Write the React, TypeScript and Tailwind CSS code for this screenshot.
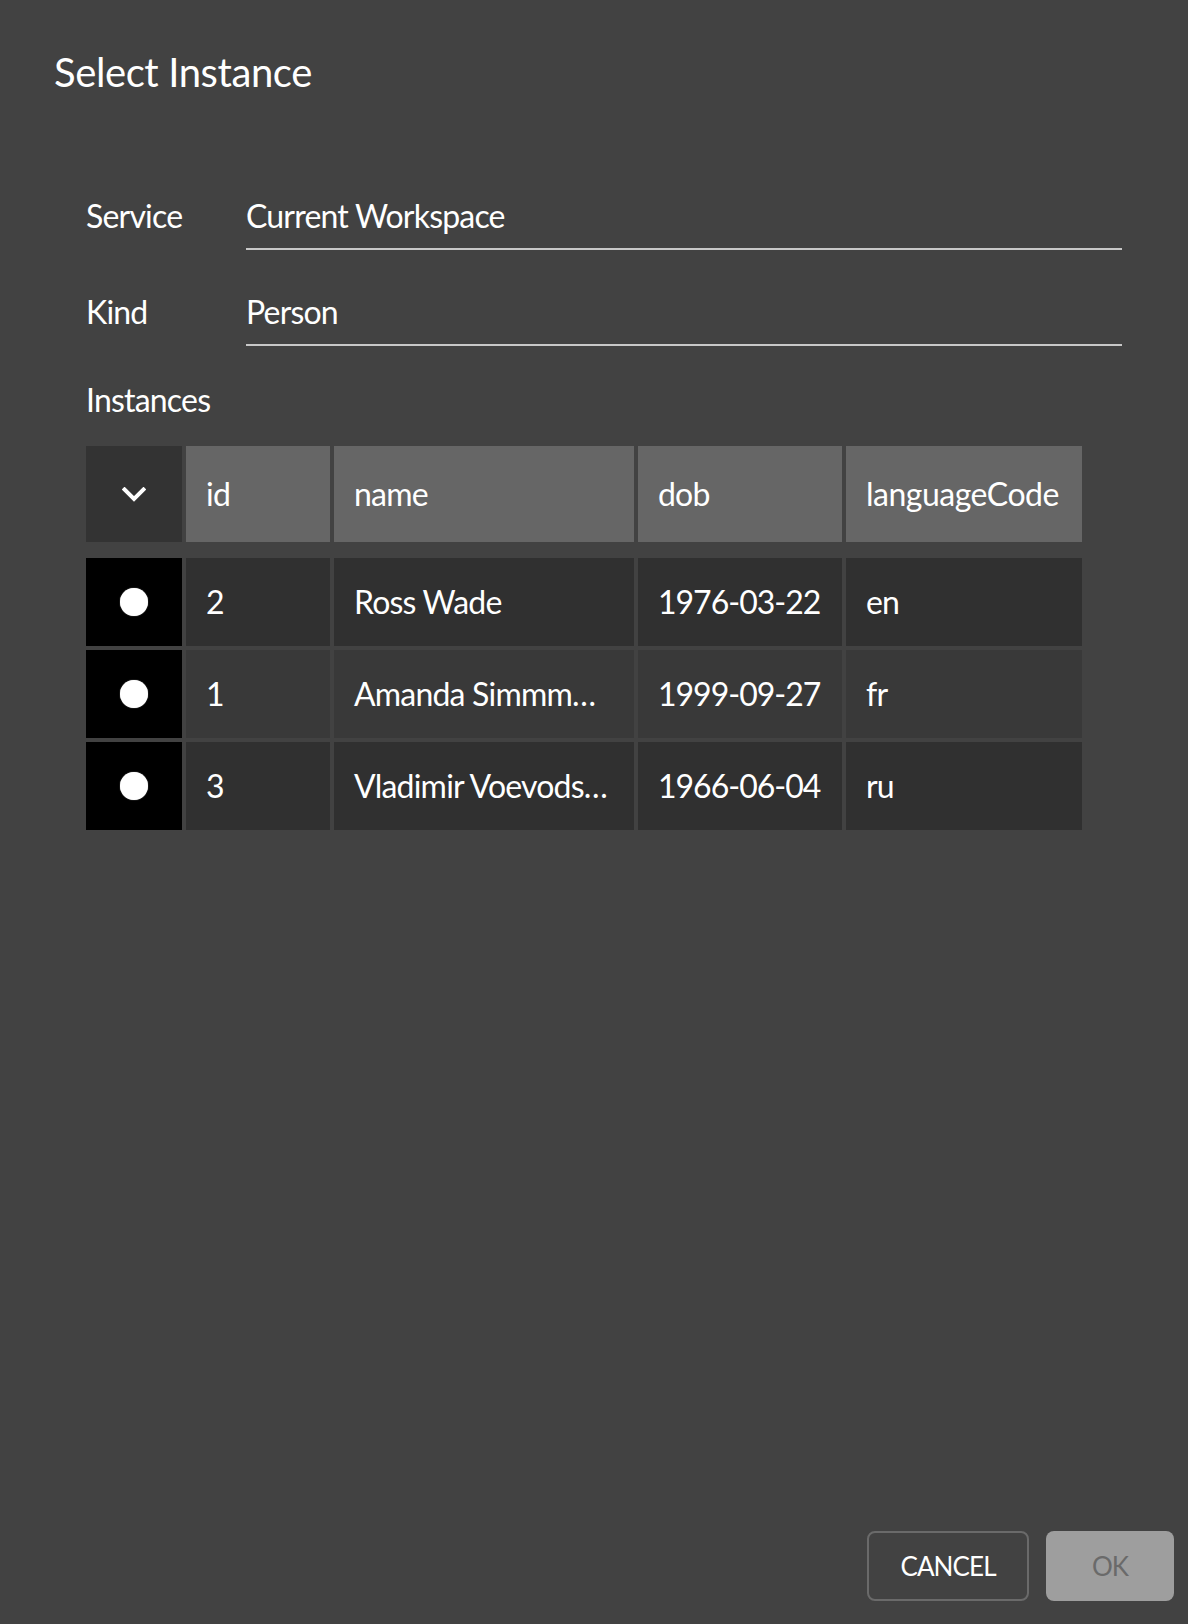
import React from "react";

const rows = [
  { id: "2", name: "Ross Wade", dob: "1976-03-22", lang: "en", bg: "bg-[#303030]" },
  { id: "1", name: "Amanda Simmm…", dob: "1999-09-27", lang: "fr", bg: "bg-[#393939]" },
  { id: "3", name: "Vladimir Voevods…", dob: "1966-06-04", lang: "ru", bg: "bg-[#303030]" },
];

const cols = "grid grid-cols-[96px_144px_300px_204px_236px] gap-x-[4px]";

function Chevron() {
  return (
    <svg width="24" height="15" viewBox="0 0 24 15" fill="none">
      <polyline points="2.5,2.5 12,12 21.5,2.5" stroke="#ffffff" strokeWidth="4" strokeLinecap="square" strokeLinejoin="miter" />
    </svg>
  );
}

export default function App() {
  return (
    <div
      className="w-[1188px] h-[1624px] bg-[#424242] flex flex-col text-white"
      style={{ fontFamily: "Lato, 'Noto Sans', sans-serif" }}
    >
      <div className="pt-[48px] pl-[54px] text-[40px] leading-[48px] tracking-[-0.4px]">Select Instance</div>

      <div className="pl-[86px] pr-[66px] mt-[100px] flex flex-col text-[32px] leading-[40px] tracking-[-0.8px]">
        <div className="flex items-start">
          <div className="w-[160px]">Service</div>
          <div className="flex-1 pb-[12px] border-b-2 border-[#c8c8c8]">Current Workspace</div>
        </div>
        <div className="flex items-start mt-[42px]">
          <div className="w-[160px]">Kind</div>
          <div className="flex-1 pb-[12px] border-b-2 border-[#c8c8c8]">Person</div>
        </div>
        <div className="mt-[34px]">Instances</div>
      </div>

      <div className="pl-[86px] mt-[26px] flex flex-col text-[32px] leading-[40px] tracking-[-0.8px]">
        <div className={`${cols} h-[96px]`}>
          <div className="bg-[#333333] flex items-center justify-center">
            <Chevron />
          </div>
          <div className="bg-[#666666] flex items-center px-[20px]">id</div>
          <div className="bg-[#666666] flex items-center px-[20px]">name</div>
          <div className="bg-[#666666] flex items-center px-[20px]">dob</div>
          <div className="bg-[#666666] flex items-center px-[20px] tracking-[-0.5px]">languageCode</div>
        </div>
        <div className="mt-[16px] flex flex-col gap-y-[4px]">
          {rows.map((r) => (
            <div key={r.id} className={`${cols} h-[88px]`}>
              <div className="bg-black flex items-center justify-center">
                <div className="w-[28px] h-[28px] rounded-full bg-white shadow-[0_0_1px_rgba(255,255,255,0.8)]" />
              </div>
              <div className={`${r.bg} flex items-center px-[20px]`}>{r.id}</div>
              <div className={`${r.bg} flex items-center px-[20px] overflow-hidden whitespace-nowrap`}>{r.name}</div>
              <div className={`${r.bg} flex items-center px-[20px] whitespace-nowrap tracking-[-1px]`}>{r.dob}</div>
              <div className={`${r.bg} flex items-center px-[20px]`}>{r.lang}</div>
            </div>
          ))}
        </div>
      </div>

      <div className="mt-auto flex justify-end gap-[17px] pr-[14px] pb-[23px]">
        <button className="w-[162px] h-[70px] rounded-[8px] border-2 border-[#6a6a6a] text-[26px] tracking-[-0.9px] text-white flex items-center justify-center">
          CANCEL
        </button>
        <button className="w-[128px] h-[70px] rounded-[8px] bg-[#9e9e9e] text-[26px] tracking-[-0.9px] text-[#6a6a6a] flex items-center justify-center">
          OK
        </button>
      </div>
    </div>
  );
}
